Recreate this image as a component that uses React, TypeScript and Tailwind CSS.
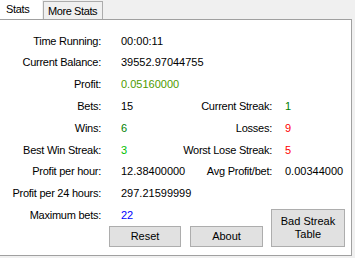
import React from 'react';

const font = { fontFamily: '"Liberation Sans", Arial, sans-serif' };

type Cell = { label: string; value: string; color?: string };

const rows: { left: Cell; right?: Cell }[] = [
  { left: { label: 'Time Running:', value: '00:00:11' } },
  { left: { label: 'Current Balance:', value: '39552.97044755' } },
  { left: { label: 'Profit:', value: '0.05160000', color: 'text-[#4f9a00]' } },
  {
    left: { label: 'Bets:', value: '15' },
    right: { label: 'Current Streak:', value: '1', color: 'text-[#008000]' },
  },
  {
    left: { label: 'Wins:', value: '6', color: 'text-[#008000]' },
    right: { label: 'Losses:', value: '9', color: 'text-[#ff0000]' },
  },
  {
    left: { label: 'Best Win Streak:', value: '3', color: 'text-[#00c000]' },
    right: { label: 'Worst Lose Streak:', value: '5', color: 'text-[#ff0000]' },
  },
  {
    left: { label: 'Profit per hour:', value: '12.38400000' },
    right: { label: 'Avg Profit/bet:', value: '0.00344000' },
  },
  { left: { label: 'Profit per 24 hours:', value: '297.21599999' } },
];

function Row({ left, right }: { left: Cell; right?: Cell }) {
  return (
    <div className="flex items-center h-[21.8px] whitespace-nowrap">
      <span className="w-[101px] text-right tracking-[-0.25px]">{left.label}</span>
      <span className={`ml-[20px] w-[60px] ${left.color ?? 'text-black'}`}>{left.value}</span>
      {right && (
        <>
          <span className="w-[91px] text-right tracking-[-0.25px]">{right.label}</span>
          <span className={`ml-[13px] ${right.color ?? 'text-black'}`}>{right.value}</span>
        </>
      )}
    </div>
  );
}

function WinButton({ children, className }: { children: React.ReactNode; className: string }) {
  return (
    <button className={`bg-[#e1e1e1] border border-[#adadad] text-black leading-[13px] flex flex-col items-center justify-center ${className}`}>
      {children}
    </button>
  );
}

export default function App() {
  return (
    <div className="w-[355px] h-[258px] bg-[#f0f0f0] text-[11px] text-black overflow-hidden" style={font}>
      {/* tab strip */}
      <div className="flex h-[19px] items-end whitespace-nowrap">
        <div className="w-[42px] h-[19px] bg-white pl-[6px] pt-[3px] leading-[13px] tracking-[-0.3px]">Stats</div>
        <div className="ml-[1px] w-[60px] h-[18px] border border-b-0 border-[#acacac] bg-[#f0f0f0] pl-[4px] pt-[3px] leading-[13px] tracking-[-0.4px]">More Stats</div>
      </div>

      {/* page */}
      <div className="w-[352px] h-[237px] bg-white border-t border-r border-b border-[#a0a0a0] pt-[10px]">
        {rows.map((r, i) => (
          <Row key={i} left={r.left} right={r.right} />
        ))}
        <div className="flex items-end">
          <div className="w-[263px]">
            <Row left={{ label: 'Maximum bets:', value: '22', color: 'text-[#0000ff]' }} />
            <div className="flex pl-[109px] gap-[9px]">
              <WinButton className="w-[72px] h-[21px]">Reset</WinButton>
              <WinButton className="w-[73px] h-[21px]">About</WinButton>
            </div>
          </div>
          <WinButton className="ml-[8px] w-[74px] h-[38px]">
            <span>Bad Streak</span>
            <span>Table</span>
          </WinButton>
        </div>
      </div>
    </div>
  );
}
